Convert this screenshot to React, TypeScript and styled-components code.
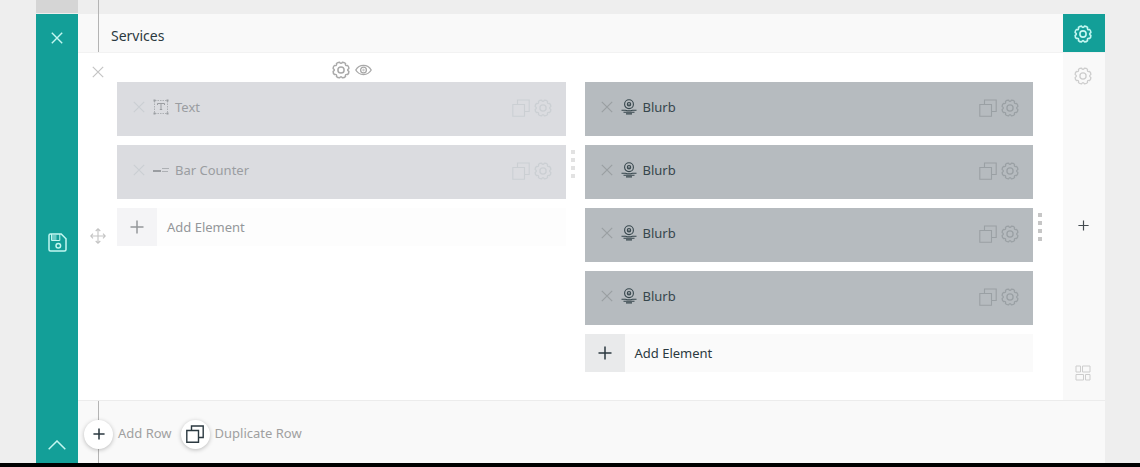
import React from 'react';
import styled, { createGlobalStyle } from 'styled-components';

const GlobalStyle = createGlobalStyle`
  * { box-sizing: border-box; }
  body {
    margin: 0;
    background: #eeeeee;
    font-family: "Noto Sans", "Open Sans", sans-serif;
    font-size: 13px;
    line-height: 20px;
    color: #2b3940;
  }
`;

const TEAL = '#139f98';

/* ---------- icons ---------- */

type IconProps = { size?: number; stroke?: number };

const Svg = styled.svg`
  display: block;
  flex: none;
  fill: none;
  stroke: currentColor;
`;

// Eight rounded teeth joined by shallow curved valleys.
const gearPath = (() => {
  const at = (deg: number, r: number) => {
    const a = (deg * Math.PI) / 180;
    return `${(9 + r * Math.cos(a)).toFixed(2)} ${(9 + r * Math.sin(a)).toFixed(2)}`;
  };
  let d = `M${at(22.5 - 12, 8)}`;
  for (let i = 0; i < 8; i++) {
    const c = 22.5 + i * 45;
    d += `Q${at(c, 8.6)} ${at(c + 12, 8)}Q${at(c + 22.5, 5.4)} ${at(c + 33, 8)}`;
  }
  return `${d}Z`;
})();

const GearIcon = ({ size = 18, stroke = 1.3 }: IconProps) => (
  <Svg width={size} height={size} viewBox="0 0 18 18" strokeWidth={stroke} strokeLinejoin="round" aria-hidden>
    <path d={gearPath} />
    <circle cx="9" cy="9" r="3.1" />
  </Svg>
);

const CloseIcon = ({ size = 12, stroke = 1.2 }: IconProps) => (
  <Svg width={size} height={size} viewBox="0 0 12 12" strokeWidth={stroke} aria-hidden>
    <path d="M.8.8l10.4 10.4M11.2.8L.8 11.2" />
  </Svg>
);

const PlusIcon = ({ size = 14, stroke = 1.5 }: IconProps) => (
  <Svg width={size} height={size} viewBox="0 0 14 14" strokeWidth={stroke} aria-hidden>
    <path d="M7 .5v13M.5 7h13" />
  </Svg>
);

const CopyIcon = ({ size = 18, stroke = 1.1 }: IconProps) => (
  <Svg width={size} height={size} viewBox="0 0 18 18" strokeWidth={stroke} aria-hidden>
    <path d="M.8 5.500h11.700v11.700H.8zM5.500 5.500V1h11.700v11.500h-4.700" />
  </Svg>
);

const EyeIcon = () => (
  <Svg width="17" height="12" viewBox="0 0 17 12" strokeWidth="1.300" aria-hidden>
    <path d="M.8 6C4.200-.2 12.800-.2 16.200 6C12.800 12 4.200 12 .8 6z" />
    <circle cx="8.500" cy="6" r="2.900" />
    <circle cx="8.500" cy="6" r=".8" strokeWidth=".8" />
  </Svg>
);

const SaveIcon = () => (
  <Svg width="19" height="19" viewBox="0 0 19 19" strokeWidth="1.500" aria-hidden>
    <path d="M2.500 1h10.700L18 5.800v10.700A1.500 1.500 0 0 1 16.500 18h-14A1.500 1.500 0 0 1 1 16.500v-14A1.500 1.500 0 0 1 2.500 1z" />
    <path d="M3.500 1v6.500h8.300V1" strokeWidth="1" />
    <path d="M4 2h4.500v5H4z" fill="currentColor" fillOpacity=".5" stroke="none" />
    <circle cx="10.300" cy="12.800" r="2.300" />
  </Svg>
);

const ChevronUpIcon = () => (
  <Svg width="18" height="10" viewBox="0 0 18 10" strokeWidth="1.500" aria-hidden>
    <path d="M.7 9.300L9 1l8.300 8.300" />
  </Svg>
);

const MoveIcon = () => (
  <Svg width="16" height="16" viewBox="0 0 16 16" strokeWidth="1.100" aria-hidden>
    <path d="M8 1v14M1 8h14M5.700 3L8 .8 10.300 3M5.700 13L8 15.200 10.300 13M3 5.700L.8 8 3 10.300M13 5.700L15.200 8 13 10.300" />
  </Svg>
);

const LayoutIcon = () => (
  <Svg width="16" height="16" viewBox="0 0 16 16" strokeWidth="1" aria-hidden>
    <path d="M1 1h4.500v6H1zM7.500 1H15v6H7.500zM1 9.500h7.500V15H1zM10.500 9.500H15V15h-4.500z" />
  </Svg>
);

const TextIcon = () => (
  <Svg width="16" height="16" viewBox="0 0 16 16" strokeWidth="1" aria-hidden>
    <path d="M2 1.500h12M2 14.500h12M1.500 2v12M14.500 2v12" strokeDasharray="1.500 1" strokeOpacity=".7" />
    <path d="M4.500 6v-1.500h7V6M8 4.500v6M6.800 10.500h2.400" />
    <path d="M.5.5h2v2h-2zM13.500.5h2v2h-2zM.5 13.500h2v2h-2zM13.500 13.500h2v2h-2z" fill="currentColor" stroke="none" />
  </Svg>
);

const BarCounterIcon = () => (
  <Svg width="16" height="16" viewBox="0 0 16 16" aria-hidden>
    <path d="M0 9h8" strokeWidth="2" />
    <path d="M9 6.500h7M9 9.500h6" strokeWidth="1" strokeOpacity=".7" />
  </Svg>
);

const BlurbIcon = () => (
  <Svg width="16" height="16" viewBox="0 0 16 16" strokeWidth="1.100" aria-hidden>
    <circle cx="8" cy="5.200" r="4.400" />
    <circle cx="8" cy="5.200" r="1.700" />
    <circle cx="8" cy="5.200" r=".7" fill="currentColor" stroke="none" />
    <path d="M.5 11.200h4l1.500.6h4l1.500-.6h4M2.500 13.200h11M5 14.900h6" />
  </Svg>
);

/* ---------- layout ---------- */

const Page = styled.main`
  min-height: 100vh;
  display: flex;
  flex-direction: column;
  padding: 0 35px 0 36px;
  border-bottom: 4px solid #000;
`;

const PreviousSection = styled.div`
  display: grid;
  grid-template-columns: 42px 21px 1fr;
  height: 14px;
`;

const PreviousTab = styled.div`
  height: 13px;
  background: #d5d5d5;
`;

const Rail = styled.div`
  border-right: 1px solid #b4b4b4;
`;

const Section = styled.section`
  flex: 1;
  display: grid;
  grid-template-columns: 42px minmax(0, 1fr);
`;

const IconButton = styled.button<{ $color?: string }>`
  display: flex;
  flex: none;
  padding: 0;
  border: 0;
  background: none;
  color: ${(p) => p.$color ?? 'inherit'};
  cursor: pointer;
`;

const SectionBar = styled.div`
  display: flex;
  flex-direction: column;
  align-items: center;
  justify-content: space-between;
  padding: 18px 0 13px;
  background: ${TEAL};
  color: #c4f7f1;
`;

const SectionContent = styled.div`
  display: flex;
  flex-direction: column;
  background: #f9f9f9;
`;

const Header = styled.header`
  display: grid;
  grid-template-columns: 21px 1fr 42px;
  height: 38px;
`;

const Title = styled.h2`
  margin: 0;
  padding: 12px 12px 0;
  font-size: 14px;
  line-height: 20px;
  font-weight: 400;
`;

const RowSettings = styled.button`
  display: flex;
  align-items: center;
  justify-content: center;
  padding: 2px 2px 0 0;
  border: 0;
  background: ${TEAL};
  color: #c4f7f1;
  cursor: pointer;
`;

const Row = styled.div`
  display: grid;
  grid-template-columns: 39px minmax(0, 1fr) 42px;
  border-top: 1px solid #f2f2f2;
  border-bottom: 1px solid #ececec;
`;

const RowGutter = styled.div`
  display: flex;
  flex-direction: column;
  align-items: flex-start;
  padding: 13px 0 7px 12px;
  background: #fff;
  color: #c4c4c4;
`;

const RowMove = styled.div`
  flex: 1;
  display: flex;
  align-items: center;
`;

const RowClose = styled.div`
  padding: 0 2px;
`;

const RowBody = styled.div`
  padding-bottom: 28px;
  background: #fff;
`;

const RowTools = styled.div`
  display: flex;
  flex-direction: column;
  align-items: center;
  justify-content: space-between;
  padding: 14px 2px 19px 0;
  color: #cdcdcd;
`;

const ColumnTools = styled.div`
  display: flex;
  align-items: center;
  justify-content: center;
  gap: 5px;
  width: 50%;
  height: 29px;
  padding: 5px 3px 0 0;
  color: #a9a9a9;
`;

const Columns = styled.div`
  display: flex;
  align-items: flex-start;
`;

const Column = styled.div<{ $handle: number }>`
  flex: 1 1 ${(p) => p.$handle}px;
  display: grid;
  grid-template-columns: minmax(0, 1fr) ${(p) => p.$handle}px;
  align-items: center;
`;

const Stack = styled.div`
  display: flex;
  flex-direction: column;
  gap: 9px;
`;

const ModuleBox = styled.article<{ $muted?: boolean }>`
  display: flex;
  align-items: center;
  height: 54px;
  padding: 0 14px 4px 16px;
  background: ${(p) => (p.$muted ? '#dbdce0' : '#b6bbbf')};
  color: ${(p) => (p.$muted ? '#9a9da1' : '#36464c')};
`;

const ModuleIcon = styled.span`
  margin: 0 6px 0 8px;
`;

const ModuleName = styled.span`
  flex: 1;
  padding-bottom: 1px;
`;

const ModuleActions = styled.div<{ $muted?: boolean }>`
  display: flex;
  gap: 4px;
  padding-top: 2px;
  color: ${(p) => (p.$muted ? '#cbcfd3' : '#9aa0a4')};
`;

const AddElement = styled.button<{ $muted?: boolean }>`
  display: flex;
  align-items: center;
  height: 38px;
  padding: 0;
  border: 0;
  background: ${(p) => (p.$muted ? '#fdfdfd' : '#fafafa')};
  color: ${(p) => (p.$muted ? '#94979a' : '#2b3940')};
  font: inherit;
  cursor: pointer;
`;

const AddIcon = styled.span<{ $muted?: boolean }>`
  display: flex;
  align-items: center;
  justify-content: center;
  width: 40px;
  height: 38px;
  margin-right: 10px;
  background: ${(p) => (p.$muted ? '#f4f4f6' : '#e9eaeb')};
`;

const Handle = styled.div<{ $muted?: boolean }>`
  display: flex;
  flex-direction: column;
  gap: 4px;
  padding-left: 5px;
  color: ${(p) => (p.$muted ? '#e2e2e2' : '#c6c6c6')};
`;

const Dot = styled.span`
  width: 4px;
  height: 4px;
  background: currentColor;
`;

const Footer = styled.footer`
  position: relative;
  flex: 1;
  display: flex;
  align-items: center;
  gap: 9px;
  min-height: 62px;
  padding: 4px 0 0 6px;

  &::before {
    content: '';
    position: absolute;
    top: 0;
    bottom: 0;
    left: 20px;
    width: 1px;
    background: #b4b4b4;
  }
`;

const FooterAction = styled.button`
  position: relative;
  display: flex;
  align-items: center;
  gap: 5px;
  padding: 0;
  border: 0;
  background: none;
  color: #a0a0a0;
  font: inherit;
  cursor: pointer;
`;

const FooterLabel = styled.span`
  padding-bottom: 2px;
`;

const Circle = styled.span`
  display: flex;
  align-items: center;
  justify-content: center;
  width: 29px;
  height: 29px;
  border-radius: 50%;
  background: #fff;
  box-shadow: 0 1px 4px rgba(0, 0, 0, 0.25);
  color: #2b3940;
`;

/* ---------- parts ---------- */

const icons = { text: TextIcon, bar: BarCounterIcon, blurb: BlurbIcon };

type ModuleData = { name: string; icon: keyof typeof icons };

const columns: { handle: number; muted: boolean; modules: ModuleData[] }[] = [
  {
    handle: 19,
    muted: true,
    modules: [
      { name: 'Text', icon: 'text' },
      { name: 'Bar Counter', icon: 'bar' },
    ],
  },
  {
    handle: 30,
    muted: false,
    modules: Array.from({ length: 4 }, () => ({ name: 'Blurb', icon: 'blurb' as const })),
  },
];

const Module = ({ name, icon, muted }: ModuleData & { muted: boolean }) => {
  const Icon = icons[icon];
  return (
    <ModuleBox $muted={muted}>
      <IconButton $color={muted ? '#cbcfd3' : '#9a9fa2'} aria-label={`Remove ${name}`}>
        <CloseIcon />
      </IconButton>
      <ModuleIcon>
        <Icon />
      </ModuleIcon>
      <ModuleName>{name}</ModuleName>
      <ModuleActions $muted={muted}>
        <IconButton aria-label={`Duplicate ${name}`}>
          <CopyIcon />
        </IconButton>
        <IconButton aria-label={`${name} settings`}>
          <GearIcon />
        </IconButton>
      </ModuleActions>
    </ModuleBox>
  );
};

export default function App() {
  return (
    <>
      <GlobalStyle />
      <Page>
        <PreviousSection>
          <PreviousTab />
          <Rail />
        </PreviousSection>
        <Section>
          <SectionBar>
            <IconButton aria-label="Close section">
              <CloseIcon stroke={1.4} />
            </IconButton>
            <IconButton aria-label="Save section">
              <SaveIcon />
            </IconButton>
            <IconButton aria-label="Collapse section">
              <ChevronUpIcon />
            </IconButton>
          </SectionBar>
          <SectionContent>
            <Header>
              <Rail />
              <Title>Services</Title>
              <RowSettings aria-label="Section settings">
                <GearIcon stroke={1.6} />
              </RowSettings>
            </Header>
            <Row>
              <RowGutter>
                <RowClose>
                  <IconButton aria-label="Remove row">
                    <CloseIcon />
                  </IconButton>
                </RowClose>
                <RowMove>
                  <IconButton aria-label="Move row">
                    <MoveIcon />
                  </IconButton>
                </RowMove>
              </RowGutter>
              <RowBody>
                <ColumnTools>
                  <IconButton aria-label="Column settings">
                    <GearIcon stroke={1.5} />
                  </IconButton>
                  <IconButton aria-label="Toggle column visibility">
                    <EyeIcon />
                  </IconButton>
                </ColumnTools>
                <Columns>
                  {columns.map(({ handle, muted, modules }) => (
                    <Column key={handle} $handle={handle}>
                      <Stack>
                        {modules.map((m, i) => (
                          <Module key={i} {...m} muted={muted} />
                        ))}
                        <AddElement $muted={muted}>
                          <AddIcon $muted={muted}>
                            <PlusIcon />
                          </AddIcon>
                          Add Element
                        </AddElement>
                      </Stack>
                      <Handle $muted={muted}>
                        <Dot />
                        <Dot />
                        <Dot />
                        <Dot />
                      </Handle>
                    </Column>
                  ))}
                </Columns>
              </RowBody>
              <RowTools>
                <IconButton aria-label="Row settings">
                  <GearIcon />
                </IconButton>
                <IconButton $color="#444b50" aria-label="Add column">
                  <PlusIcon size={11} />
                </IconButton>
                <IconButton aria-label="Row layout">
                  <LayoutIcon />
                </IconButton>
              </RowTools>
            </Row>
            <Footer>
              <FooterAction>
                <Circle>
                  <PlusIcon size={12} stroke={1.8} />
                </Circle>
                <FooterLabel>Add Row</FooterLabel>
              </FooterAction>
              <FooterAction>
                <Circle>
                  <CopyIcon stroke={1.4} />
                </Circle>
                <FooterLabel>Duplicate Row</FooterLabel>
              </FooterAction>
            </Footer>
          </SectionContent>
        </Section>
      </Page>
    </>
  );
}
